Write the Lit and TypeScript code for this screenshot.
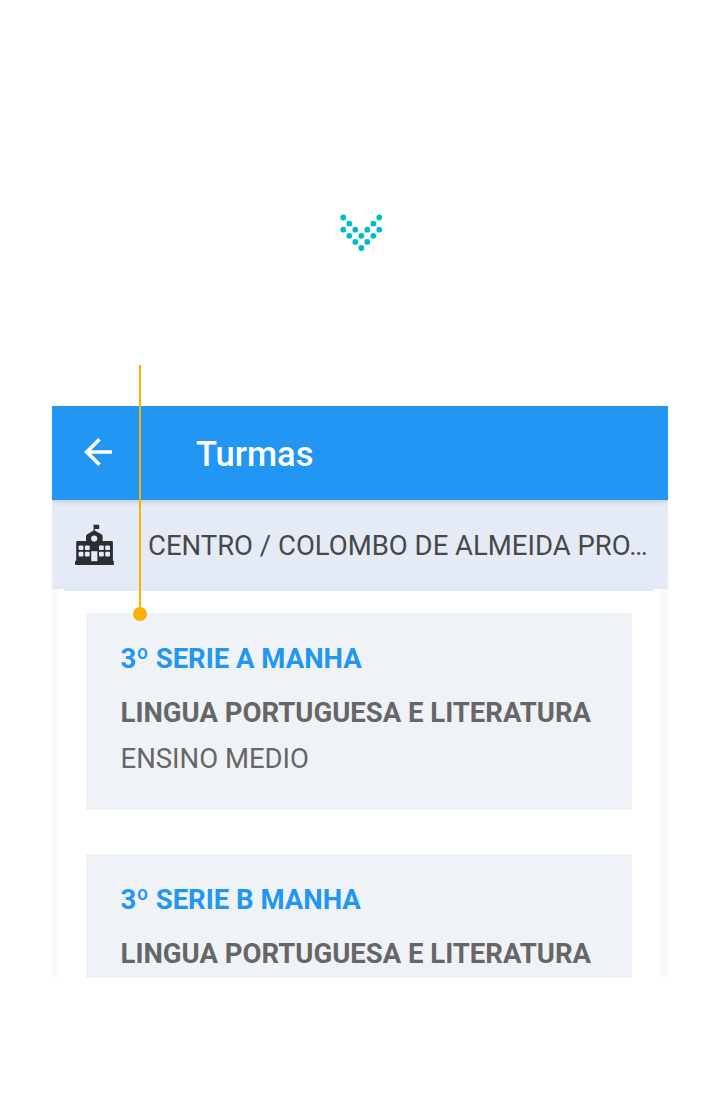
import { LitElement, html, css, svg, nothing } from "lit";
import { customElement } from "lit/decorators.js";

interface Turma {
  name: string;
  subject: string;
  level?: string;
}

const TURMAS: Turma[] = [
  { name: "3º SERIE A MANHA", subject: "LINGUA PORTUGUESA E LITERATURA", level: "ENSINO MEDIO" },
  { name: "3º SERIE B MANHA", subject: "LINGUA PORTUGUESA E LITERATURA" },
];

// Dot columns for each row of the chevron, on a 6px grid.
const CHEVRON = [[0, 6], [1, 5], [0, 2, 4, 6], [1, 3, 5], [2, 4], [3]];

const WINDOW_X = [78.6, 84.9, 99, 105.2];
const WINDOW_Y = [545.4, 551.7];

@customElement("turma-card")
export class TurmaCard extends LitElement {
  static properties = { turma: { attribute: false } };
  declare turma: Turma;

  static styles = css`
    :host {
      display: block;
      flex: none;
      box-sizing: border-box;
      height: 196.5px;
      padding: 28px 34.5px 0;
      background: #eff3f8;
      font-size: 27.5px;
      line-height: 36px;
      white-space: nowrap;
      color: #666;
    }
    .name {
      color: #2196f3;
      font-weight: 700;
      margin-bottom: 18px;
    }
    .subject {
      font-weight: 700;
      margin-bottom: 9.5px;
    }
  `;

  render() {
    return html`
      <div class="name">${this.turma.name}</div>
      <div class="subject">${this.turma.subject}</div>
      ${this.turma.level ? html`<div class="level">${this.turma.level}</div>` : nothing}
    `;
  }
}

@customElement("app-root")
export class AppRoot extends LitElement {
  static styles = css`
    :host {
      display: block;
      position: relative;
      box-sizing: border-box;
      height: 1096px;
      padding: 214px 52px 0;
      background: #fff;
      overflow: hidden;
      font-family: Roboto, "Liberation Sans", sans-serif;
    }
    .chevron {
      display: block;
      width: 42px;
      height: 37px;
      margin: 0 0 155px 288px;
      fill: #00bcc9;
    }
    .phone {
      display: flex;
      flex-direction: column;
      height: 572px;
      overflow: hidden;
    }
    .toolbar {
      display: flex;
      align-items: center;
      flex: none;
      height: 94px;
      box-sizing: border-box;
      padding-left: 32px;
      background: #2196f3;
      color: #fff;
      box-shadow: 0 1px 6px rgba(0, 0, 0, 0.18);
      z-index: 1;
    }
    .back {
      width: 30px;
      height: 30px;
      margin: 0 82px 2px 0;
    }
    .title {
      font-size: 34.5px;
      line-height: 40px;
      font-weight: 500;
      padding-top: 2px;
    }
    .school {
      display: flex;
      align-items: center;
      flex: none;
      box-sizing: border-box;
      height: 89px;
      padding: 1px 20px 0 22px;
      background: #e4ebf7;
    }
    .school-icon {
      flex: none;
      width: 40px;
      height: 42px;
      margin-right: 34px;
    }
    .wall {
      fill: #2c2e32;
    }
    .opening {
      fill: #e4ebf7;
    }
    .school-name {
      flex: none;
      font-size: 27.5px;
      line-height: 40px;
      white-space: nowrap;
      color: #484848;
      padding-top: 2px;
    }
    .body {
      display: flex;
      flex: 1;
      min-height: 0;
      background: #fafafa;
      padding: 0 8px 0 7px;
    }
    .list {
      flex: 1;
      padding: 0 28px 0 27px;
      background: #fff;
    }
    .edge {
      height: 2px;
      margin: 0 -22px 22px;
      background: #e4ebf7;
    }
    .cards {
      display: flex;
      flex-direction: column;
      gap: 44.5px;
    }
    .pointer {
      position: absolute;
      left: 132px;
      top: 365px;
      width: 16px;
      height: 257px;
      z-index: 2;
    }
  `;

  render() {
    return html`
      <svg class="chevron" viewBox="0 0 42 37">
        ${CHEVRON.map((cols, row) =>
          cols.map((c) => svg`<circle cx=${3.3 + c * 6} cy=${3.5 + row * 6.1} r="2.9"></circle>`)
        )}
      </svg>
      <div class="phone">
        <div class="toolbar">
          <svg class="back" viewBox="0 0 30 30" fill="none" stroke="#fff" stroke-width="3.7">
            <path d="M28 15H3M15.500 2.300 2.800 15l12.700 12.700"></path>
          </svg>
          <div class="title">Turmas</div>
        </div>
        <div class="school">
          <svg class="school-icon" viewBox="74 524 40 42">
            <path
              class="wall"
              d="M93.600 524.400h1.200v.4h4.400v4.100H94.800v1.700l6.900 3.900q.9.500.9 1.500v5.100h9.100q1.200 0 1.200 1.200v18.500h.1q.9 0 .9.9v2.200q0 1.200-1.200 1.200H76.200q-1.200 0-1.200-1.200v-2.200q0-.9.900-.9h.3v-18.500q0-1.200 1.200-1.200h8.600v-5.100q0-1 .9-1.500l6.700-3.900Z"
            ></path>
            <circle class="opening" cx="94.200" cy="538.500" r="3.100"></circle>
            ${WINDOW_Y.map((y) =>
              WINDOW_X.map((x) => svg`<rect class="opening" x=${x} y=${y} width="4.800" height="4.700" rx="1.200"></rect>`)
            )}
            <rect class="opening" x="91.200" y="551.200" width="6.200" height="10"></rect>
          </svg>
          <div class="school-name">CENTRO / COLOMBO DE ALMEIDA PRO…</div>
        </div>
        <div class="body">
          <div class="list">
            <div class="edge"></div>
            <div class="cards">
              ${TURMAS.map((t) => html`<turma-card .turma=${t}></turma-card>`)}
            </div>
          </div>
        </div>
      </div>
      <svg class="pointer" viewBox="0 0 16 257">
        <path d="M8 0V249" stroke="#f9b103" stroke-width="2"></path>
        <circle cx="8" cy="249" r="7.100" fill="#f9b103"></circle>
      </svg>
    `;
  }
}
